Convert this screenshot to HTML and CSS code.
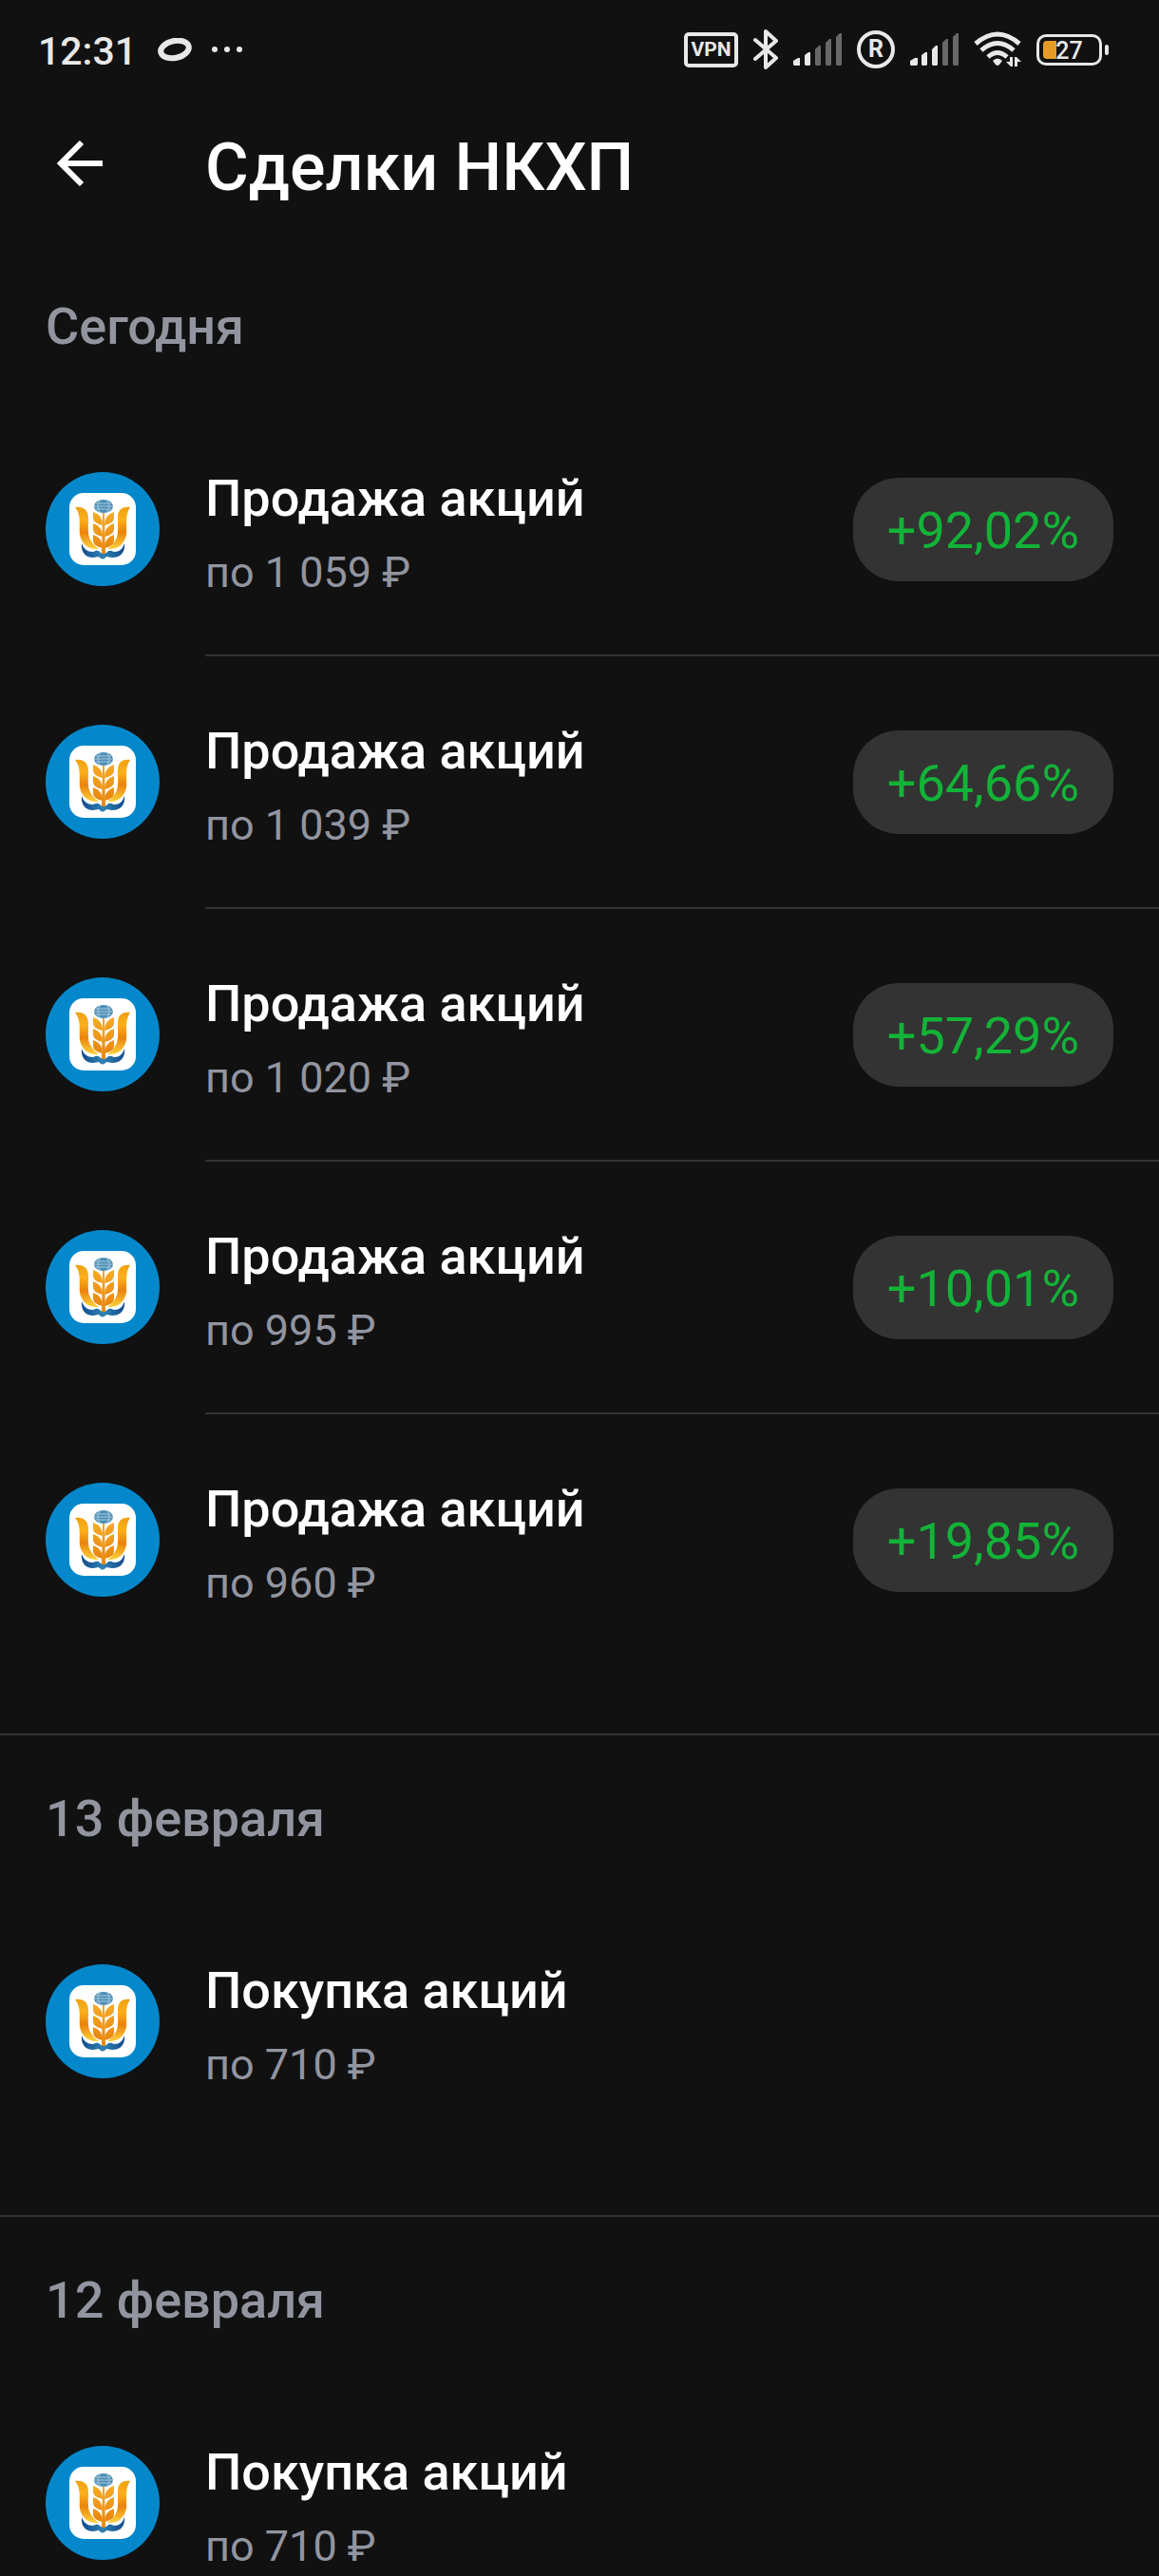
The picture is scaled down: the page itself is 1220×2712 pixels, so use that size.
FILE: index.html
```html
<!DOCTYPE html>
<html lang="ru">
<head>
  <meta charset="UTF-8">
  <meta name="viewport" content="width=device-width, initial-scale=1.0">
  <title>Сделки НКХП</title>
  <link rel="stylesheet" href="styles.css">
</head>
<body>

<!-- Shared drawings -->
<svg class="sprite" aria-hidden="true">
  <defs>
    <linearGradient id="petal" x1="0" y1="0" x2="0" y2="1">
      <stop offset="0" stop-color="#f0a010"/>
      <stop offset="0.3" stop-color="#fbb01c"/>
      <stop offset="0.6" stop-color="#ea830c"/>
      <stop offset="1" stop-color="#fdd23a"/>
    </linearGradient>
    <linearGradient id="grain" x1="0" y1="0" x2="0" y2="1">
      <stop offset="0" stop-color="#f7ab25"/>
      <stop offset="1" stop-color="#e8860f"/>
    </linearGradient>
    <linearGradient id="wave" x1="0" y1="0" x2="1" y2="0">
      <stop offset="0" stop-color="#124a8c"/>
      <stop offset="0.5" stop-color="#2f83b5"/>
      <stop offset="1" stop-color="#124a8c"/>
    </linearGradient>
  </defs>
  <symbol id="logo" viewBox="0 0 120 120">
    <circle cx="60" cy="60" r="60" fill="#0488cb"/>
    <rect x="25" y="22" width="70" height="76" rx="15" fill="#fff"/>
    <path d="M38 75c2 6 6 9 12 9 3-1 5-2 7 0s6 2 8 0 4-1 7 0c6 0 9-3 11-9 1 9-4 15-13 15-4 0-5-2-7 0s-4 2-6 0-3 0-7 0c-8 0-13-6-12-15z" fill="url(#wave)"/>
    <path d="M31 37c9-1 14 3 14 12 0 8-1 17 2 22 2 4 5 7 9 10-11 1-18-5-20-15-1-9 2-21-5-29z" fill="url(#petal)"/>
    <path d="M89 37c-9-1-13 3-13 12 0 8 1 17-2 22-2 4-5 7-9 10 11 1 18-5 20-15 1-9-2-21 4-29z" fill="url(#petal)"/>
    <g fill="url(#grain)">
      <path d="M50 42q10 3 10 14-10-2-10-8zM50 54q10 3 10 14-10-2-10-8zM50 66q10 3 10 14-10-2-10-8z"/>
      <path d="M72 42q-10 3-10 14 10-2 10-8zM72 54q-10 3-10 14 10-2 10-8zM72 66q-10 3-10 14 10-2 10-8z"/>
      <path d="M60 43h2l1 43h-4z"/>
    </g>
    <ellipse cx="61" cy="36" rx="10" ry="7" fill="#4a8fb8"/>
    <path d="M53 33h16M51 36h20M53 39h16M57 30q-4 6 0 12M65 30q4 6 0 12" fill="none" stroke="#a9c8d8" stroke-width="1"/>
  </symbol>
</svg>

<div class="screen">
  <div class="status-bar">
    <span class="clock">12:31</span>
    <svg class="ring" width="36" height="25" viewBox="0 0 36 25">
      <ellipse cx="18" cy="12" rx="15" ry="9" transform="rotate(-12 18 12)" fill="none" stroke="#e8e8e8" stroke-width="6"/>
    </svg>
    <svg class="dots" width="34" height="8" viewBox="0 0 34 8" fill="#e8e8e8">
      <circle cx="4" cy="4" r="3"/><circle cx="17" cy="4" r="3"/><circle cx="30" cy="4" r="3"/>
    </svg>

    <div class="status-icons">
      <span class="vpn">VPN</span>
      <svg width="26" height="42" viewBox="0 0 26 42" fill="none" stroke="#e8e8e8" stroke-width="4" stroke-linejoin="round" stroke-linecap="round">
        <path d="M2 11l22 19-11 10V2l11 10L2 31"/>
      </svg>
      <svg width="51" height="34" viewBox="0 0 51 34" fill="#e8e8e8">
        <path d="M0 29l5-3h2v8H1l-1-1zM12 23l4-3h2v13l-1 1h-4l-1-1z"/>
        <path d="M23 17l4-4h2v20l-1 1h-4l-1-1zM34 10l4-4h2v27l-1 1h-4l-1-1zM45 4l4-4h2v33l-1 1h-4l-1-1z" fill="#686868"/>
      </svg>
      <span class="roaming">R</span>
      <svg width="51" height="34" viewBox="0 0 51 34" fill="#e8e8e8">
        <path d="M0 29l5-3h3v7l-1 1H1l-1-1zM12 23l4-3h2v13l-1 1h-4l-1-1zM23 17l4-4h2v20l-1 1h-4l-1-1z"/>
        <path d="M34 10l4-4h2v27l-1 1h-4l-1-1zM45 4l4-4h2v33l-1 1h-4l-1-1z" fill="#686868"/>
      </svg>
      <svg width="50" height="38" viewBox="0 0 50 38">
        <g fill="none" stroke="#e8e8e8" stroke-width="5">
          <path d="M2 13Q25-7 48 13"/>
          <path d="M8 20Q25 5 42 20"/>
          <path d="M15 27Q25 18 35 27"/>
        </g>
        <path d="M20 31q5-5 10 0l-3 4q-2 2-4 0z" fill="#e8e8e8"/>
        <path d="M38 27h3v10h-2l-5-5h4zM43 37V27h2l5 5h-4v5z" fill="#e8e8e8"/>
      </svg>
      <span class="battery"><span class="battery-level"></span><span class="battery-text">27</span></span>
    </div>
  </div>

  <header class="app-bar">
    <button type="button" class="back" aria-label="Назад">
      <svg width="48" height="48" viewBox="0 0 48 48" fill="none" stroke="#fff" stroke-width="6">
        <path d="M26 2L4 24l22 22M4 24h44"/>
      </svg>
    </button>
    <h1>Сделки НКХП</h1>
  </header>

  <main class="deals">
    <section class="day">
      <h2>Сегодня</h2>
      <ul>
        <li class="deal">
          <svg class="logo"><use href="#logo"/></svg>
          <div class="info">
            <div class="text"><h3>Продажа акций</h3><p>по 1 059 ₽</p></div>
            <span class="badge">+92,02%</span>
          </div>
        </li>
        <li class="deal">
          <svg class="logo"><use href="#logo"/></svg>
          <div class="info">
            <div class="text"><h3>Продажа акций</h3><p>по 1 039 ₽</p></div>
            <span class="badge">+64,66%</span>
          </div>
        </li>
        <li class="deal">
          <svg class="logo"><use href="#logo"/></svg>
          <div class="info">
            <div class="text"><h3>Продажа акций</h3><p>по 1 020 ₽</p></div>
            <span class="badge">+57,29%</span>
          </div>
        </li>
        <li class="deal">
          <svg class="logo"><use href="#logo"/></svg>
          <div class="info">
            <div class="text"><h3>Продажа акций</h3><p>по 995 ₽</p></div>
            <span class="badge">+10,01%</span>
          </div>
        </li>
        <li class="deal">
          <svg class="logo"><use href="#logo"/></svg>
          <div class="info">
            <div class="text"><h3>Продажа акций</h3><p>по 960 ₽</p></div>
            <span class="badge">+19,85%</span>
          </div>
        </li>
      </ul>
    </section>

    <section class="day">
      <h2>13 февраля</h2>
      <ul>
        <li class="deal">
          <svg class="logo"><use href="#logo"/></svg>
          <div class="info">
            <div class="text"><h3>Покупка акций</h3><p>по 710 ₽</p></div>
          </div>
        </li>
      </ul>
    </section>

    <section class="day">
      <h2>12 февраля</h2>
      <ul>
        <li class="deal">
          <svg class="logo"><use href="#logo"/></svg>
          <div class="info">
            <div class="text"><h3>Покупка акций</h3><p>по 710 ₽</p></div>
          </div>
        </li>
      </ul>
    </section>
  </main>
</div>

</body>
</html>
```

FILE: styles.css
```css
* {
  box-sizing: border-box;
}

body {
  margin: 0;
  background-color: #111111;
  color: #ffffff;
  font-family: Roboto, "Noto Sans", sans-serif;
}

h1, h2, h3, p, ul {
  margin: 0;
  padding: 0;
}

ul {
  list-style: none;
}

svg {
  display: block;
  flex-shrink: 0;
}

.sprite {
  position: absolute;
  width: 0;
  height: 0;
}

.screen {
  display: flex;
  flex-direction: column;
  height: 100vh;
}

/* Status bar */
.status-bar {
  display: flex;
  align-items: center;
  height: 104px;
  padding: 0 53px 0 40px;
  color: #e8e8e8;
}

.clock {
  font-size: 41px;
  font-weight: 500;
  line-height: 48px;
  padding-top: 4px;
}

.ring {
  margin-left: 22px;
}

.dots {
  margin-left: 20px;
}

.status-icons {
  display: flex;
  align-items: center;
  gap: 16px;
  margin-left: auto;
}

.vpn {
  width: 57px;
  height: 37px;
  border: 4px solid #e8e8e8;
  border-radius: 5px;
  font-size: 21px;
  font-weight: 700;
  line-height: 29px;
  text-align: center;
}

.roaming {
  width: 40px;
  height: 40px;
  border: 4px solid #e8e8e8;
  border-radius: 50%;
  font-size: 25px;
  font-weight: 700;
  line-height: 32px;
  text-align: center;
}

.battery {
  position: relative;
  width: 69px;
  height: 33px;
  margin-right: 7px;
  padding: 4px;
  border: 3px solid #e8e8e8;
  border-radius: 10px;
}

.battery::after {
  content: "";
  position: absolute;
  top: 8px;
  right: -10px;
  width: 4px;
  height: 11px;
  border-radius: 2px;
  background-color: #e8e8e8;
}

.battery-level {
  display: block;
  width: 14px;
  height: 19px;
  border-radius: 4px 0 0 4px;
  background-color: #e59c27;
}

.battery-text {
  position: absolute;
  top: 0;
  left: 0;
  width: 100%;
  font-size: 25px;
  font-weight: 500;
  line-height: 30px;
  text-align: center;
}

/* App bar */
.app-bar {
  display: flex;
  align-items: center;
  height: 144px;
  margin-bottom: 8px;
}

.back {
  width: 216px;
  padding: 0 60px 8px;
  border: none;
  background: none;
  cursor: pointer;
}

.app-bar h1 {
  font-size: 70px;
  font-weight: 500;
  line-height: 80px;
}

/* Deals */
.deals {
  flex: 1;
  min-height: 0;
  overflow-y: auto;
  scrollbar-width: none;
}

.day {
  padding-bottom: 72px;
  border-bottom: 2px solid #333333;
}

.day h2 {
  padding: 56px 48px 49px;
  color: #9295a0;
  font-size: 54px;
  font-weight: 500;
  line-height: 64px;
}

.deal {
  display: flex;
  padding-left: 48px;
}

.logo {
  width: 120px;
  height: 120px;
  margin: 72px 48px 72px 0;
}

.info {
  display: flex;
  flex: 1;
  align-items: center;
  justify-content: space-between;
  min-height: 266px;
  padding-right: 48px;
  border-bottom: 2px solid #333333;
}

.deal:last-child .info {
  min-height: 264px;
  border-bottom: none;
}

.text {
  padding-top: 8px;
}

.text h3 {
  font-size: 54px;
  font-weight: 500;
  line-height: 64px;
}

.text p {
  margin-top: 20px;
  color: #9295a0;
  font-size: 45px;
  line-height: 52px;
}

.badge {
  padding: 24px 36px 21px;
  border-radius: 48px;
  background-color: #333333;
  color: #13b338;
  font-size: 54px;
  line-height: 64px;
}
```
